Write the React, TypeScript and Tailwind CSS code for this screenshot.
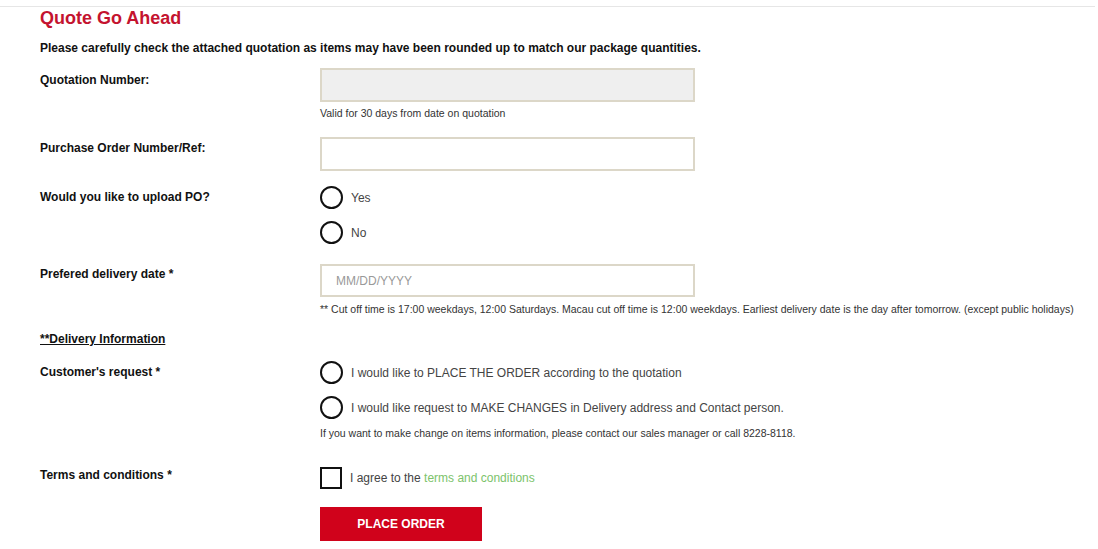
const Radio = ({ label }: { label: string }) => (
  <label className="flex items-center h-[23px]">
    <span className="w-[23px] h-[23px] rounded-full border-2 border-[#111] bg-white shrink-0" />
    <span className="ml-[8px] text-[12px] text-[#444]">{label}</span>
  </label>
)

const App: React.FC = () => {
  return (
    <div className="min-h-[549px] bg-white font-['Liberation_Sans',Arial,sans-serif] text-[#111]">
      <div className="pt-[6px]">
        <div className="border-t border-[#e6e6e6] w-[1095px]" />
      </div>
      <div className="px-[40px]">
        <h1 className="text-[18px] leading-[20px] font-bold text-[#c4132f] mt-[1px]">Quote Go Ahead</h1>
        <p className="text-[12px] leading-[14px] font-bold mt-[13px]">
          Please carefully check the attached quotation as items may have been rounded up to match our package quantities.
        </p>

        {/* quotation number */}
        <div className="flex mt-[13px]">
          <div className="w-[280px] shrink-0 text-[12px] font-bold pt-[4px] leading-[16px]">Quotation Number:</div>
          <div>
            <div className="w-[375px] h-[34px] bg-[#efefef] border-2 border-[#dcd7c8]" />
            <p className="text-[10.5px] leading-[14px] text-[#333] mt-[4px]">Valid for 30 days from date on quotation</p>
          </div>
        </div>

        {/* PO number */}
        <div className="flex mt-[17px]">
          <div className="w-[280px] shrink-0 text-[12px] font-bold pt-[3px] leading-[16px]">Purchase Order Number/Ref:</div>
          <div className="w-[375px] h-[34px] bg-white border-2 border-[#dcd7c8]" />
        </div>

        {/* upload PO */}
        <div className="flex mt-[15px]">
          <div className="w-[280px] shrink-0 text-[12px] font-bold pt-[3px] leading-[16px]">Would you like to upload PO?</div>
          <div className="flex flex-col gap-[12px]">
            <Radio label="Yes" />
            <Radio label="No" />
          </div>
        </div>

        {/* delivery date */}
        <div className="flex mt-[20px]">
          <div className="w-[280px] shrink-0 text-[12px] font-bold pt-[2px] leading-[16px]">Prefered delivery date *</div>
          <div>
            <div className="w-[375px] h-[33px] bg-white border-2 border-[#dcd7c8] flex items-center px-[14px] text-[12px] text-[#999]">
              MM/DD/YYYY
            </div>
            <p className="text-[10.5px] leading-[14px] text-[#333] mt-[5px] whitespace-nowrap">
              ** Cut off time is 17:00 weekdays, 12:00 Saturdays. Macau cut off time is 12:00 weekdays. Earliest delivery date is the day after tomorrow. (except public holidays)
            </p>
          </div>
        </div>

        <p className="text-[12px] font-bold underline leading-[16px] mt-[15px]">**Delivery Information</p>

        {/* customer's request */}
        <div className="flex mt-[14px]">
          <div className="w-[280px] shrink-0 text-[12px] font-bold pt-[3px] leading-[16px]">Customer's request *</div>
          <div>
            <div className="flex flex-col gap-[12px]">
              <Radio label="I would like to PLACE THE ORDER according to the quotation" />
              <Radio label="I would like request to MAKE CHANGES in Delivery address and Contact person." />
            </div>
            <p className="text-[10.5px] leading-[14px] text-[#333] mt-[7px]">
              If you want to make change on items information, please contact our sales manager or call 8228-8118.
            </p>
          </div>
        </div>

        {/* terms */}
        <div className="flex mt-[27px]">
          <div className="w-[280px] shrink-0 text-[12px] font-bold leading-[16px]">Terms and conditions *</div>
          <div>
            <label className="flex items-center">
              <span className="w-[22px] h-[22px] border-2 border-[#111] bg-white shrink-0" />
              <span className="ml-[8px] text-[12px] text-[#444]">
                I agree to the <span className="text-[#7cc36b]">terms and conditions</span>
              </span>
            </label>
            <button className="mt-[18px] w-[162px] h-[34px] bg-[#d0021b] text-white text-[12px] font-bold">
              PLACE ORDER
            </button>
          </div>
        </div>
      </div>
    </div>
  )
}

export default App
